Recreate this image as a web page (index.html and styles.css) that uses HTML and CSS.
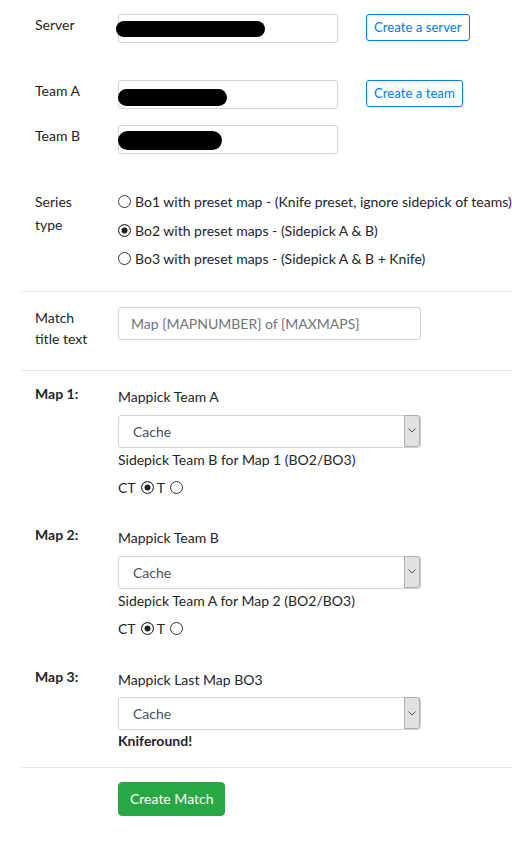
FILE: index.html
```html
<!DOCTYPE html>
<html lang="en">
<head>
<meta charset="utf-8">
<title>Create Match</title>
<link rel="stylesheet" href="styles.css">
</head>
<body>
<form class="page">
  <div class="row row-server">
    <label class="lbl">Server</label>
    <div class="field">
      <div class="input-wrap">
        <input class="input input-short" type="text">
        <span class="redact redact-server"></span>
      </div>
      <button type="button" class="btn-outline">Create a server</button>
    </div>
  </div>

  <div class="row row-team-a">
    <label class="lbl">Team A</label>
    <div class="field">
      <div class="input-wrap">
        <input class="input input-short" type="text">
        <span class="redact redact-a"></span>
      </div>
      <button type="button" class="btn-outline">Create a team</button>
    </div>
  </div>

  <div class="row row-team-b">
    <label class="lbl">Team B</label>
    <div class="field">
      <div class="input-wrap">
        <input class="input input-short" type="text">
        <span class="redact redact-b"></span>
      </div>
    </div>
  </div>

  <div class="row row-series">
    <label class="lbl lbl-series">Series<br>type</label>
    <div class="radios">
      <label class="opt"><input type="radio" name="series" class="radio">Bo1 with preset map - (Knife preset, ignore sidepick of teams)</label>
      <label class="opt"><input type="radio" name="series" class="radio" checked>Bo2 with preset maps - (Sidepick A &amp; B)</label>
      <label class="opt"><input type="radio" name="series" class="radio">Bo3 with preset maps - (Sidepick A &amp; B + Knife)</label>
    </div>
  </div>

  <hr class="sep sep-1">

  <div class="row row-title">
    <label class="lbl">Match<br>title text</label>
    <div class="field">
      <input class="input input-long" type="text" placeholder="Map {MAPNUMBER} of {MAXMAPS}">
    </div>
  </div>

  <hr class="sep sep-2">

  <div class="row row-map row-map1">
    <label class="lbl lbl-bold">Map 1:</label>
    <div class="map-body">
      <div class="sub">Mappick Team A</div>
      <div class="select-wrap">
        <select class="select"><option>Cache</option></select>
        <span class="select-arrow"><svg width="8" height="5" viewBox="0 0 8 5"><polyline points="0.5,0.5 4,4 7.5,0.5" fill="none" stroke="#555" stroke-width="1"/></svg></span>
      </div>
      <div class="sub sub-side">Sidepick Team B for Map 1 (BO2/BO3)</div>
      <div class="sides">CT<input type="radio" name="side1" class="radio" checked>T<input type="radio" name="side1" class="radio"></div>
    </div>
  </div>

  <div class="row row-map row-map2">
    <label class="lbl lbl-bold">Map 2:</label>
    <div class="map-body">
      <div class="sub">Mappick Team B</div>
      <div class="select-wrap">
        <select class="select"><option>Cache</option></select>
        <span class="select-arrow"><svg width="8" height="5" viewBox="0 0 8 5"><polyline points="0.5,0.5 4,4 7.5,0.5" fill="none" stroke="#555" stroke-width="1"/></svg></span>
      </div>
      <div class="sub sub-side">Sidepick Team A for Map 2 (BO2/BO3)</div>
      <div class="sides">CT<input type="radio" name="side2" class="radio" checked>T<input type="radio" name="side2" class="radio"></div>
    </div>
  </div>

  <div class="row row-map row-map3">
    <label class="lbl lbl-bold">Map 3:</label>
    <div class="map-body">
      <div class="sub">Mappick Last Map BO3</div>
      <div class="select-wrap">
        <select class="select"><option>Cache</option></select>
        <span class="select-arrow"><svg width="8" height="5" viewBox="0 0 8 5"><polyline points="0.5,0.5 4,4 7.5,0.5" fill="none" stroke="#555" stroke-width="1"/></svg></span>
      </div>
      <div class="sub knife">Kniferound!</div>
    </div>
  </div>

  <hr class="sep sep-3">

  <div class="row row-submit">
    <span></span>
    <div><button type="button" class="btn-success">Create Match</button></div>
  </div>
</form>
</body>
</html>
```

FILE: styles.css
```css
html, body {
  margin: 0;
  padding: 0;
  background: #fff;
}
body {
  font-family: Lato, "Open Sans", sans-serif;
  font-size: 14px;
  line-height: 21px;
  color: #212529;
  overflow: hidden;
}
.page {
  margin: 0;
  padding: 0 0 40px 0;
}
.row {
  display: grid;
  grid-template-columns: 83px auto;
  padding-left: 35px;
  align-items: start;
}
.lbl {
  line-height: 21px;
  white-space: nowrap;
}
.lbl-bold {
  font-weight: 700;
}
.field {
  display: flex;
  align-items: flex-start;
  gap: 28px;
}
.input-wrap {
  position: relative;
}
.input {
  box-sizing: border-box;
  display: block;
  font-family: inherit;
  font-size: 14px;
  color: #495057;
  background: #fff;
  border: 1px solid #ced4da;
  border-radius: 3px;
  padding: 0 12px;
  margin: 0;
  outline: none;
}
.input-short {
  width: 220px;
  height: 29px;
}
.input-long {
  width: 303px;
  height: 33px;
}
.input::placeholder {
  color: #6c757d;
  opacity: 1;
}
.redact {
  position: absolute;
  background: #000;
  border-radius: 9px;
}
.redact-server {
  left: -2px;
  top: 7px;
  width: 149px;
  height: 16px;
}
.redact-a {
  left: 0;
  top: 9px;
  width: 109px;
  height: 17px;
}
.redact-b {
  left: 0;
  top: 6px;
  width: 104px;
  height: 19px;
  border-radius: 10px;
}
.btn-outline {
  box-sizing: border-box;
  height: 27px;
  padding: 0 7px;
  font-family: inherit;
  font-size: 13.2px;
  line-height: 25px;
  color: #007bff;
  background: #fff;
  border: 1px solid #007bff;
  border-radius: 3px;
  cursor: pointer;
}
.row-server { padding-top: 14px; }
.row-team-a { margin-top: 37px; }
.row-team-b { margin-top: 16px; }
.row-series { margin-top: 36px; }
.lbl-series { line-height: 23px; }
.radios {
  display: flex;
  flex-direction: column;
  gap: 5.5px;
}
.opt {
  display: flex;
  align-items: center;
  line-height: 23px;
  white-space: nowrap;
}
.radio {
  -webkit-appearance: none;
  appearance: none;
  box-sizing: border-box;
  width: 13px;
  height: 13px;
  margin: 0 4px 0 0;
  border: 1px solid #333;
  border-radius: 50%;
  background: #fff;
  flex: none;
}
.radio:checked {
  background: #222;
  box-shadow: inset 0 0 0 2.5px #fff;
}
.sep {
  border: 0;
  border-top: 1px solid #e5e5e5;
  height: 0;
  margin: 0 0 0 21px;
}
.sep-1 { margin-top: 20.5px; }
.row-title { margin-top: 15.5px; }
.sep-2 { margin-top: 21px; }
.row-map1 { margin-top: 12px; }
.row-map2 { margin-top: 26px; }
.row-map3 { margin-top: 26.5px; }
.map-body {
  display: flex;
  flex-direction: column;
  padding-top: 3px;
}
.sub {
  line-height: 21px;
  white-space: nowrap;
}
.select-wrap {
  position: relative;
  width: 303px;
  height: 33px;
  margin-top: 7.5px;
}
.select {
  -webkit-appearance: none;
  appearance: none;
  box-sizing: border-box;
  width: 303px;
  height: 33px;
  margin: 0;
  padding: 0 0 0 14px;
  font-family: inherit;
  font-size: 14px;
  color: #495057;
  background: #fff;
  border: 1px solid #ced4da;
  border-radius: 3px;
  outline: none;
}
.select-arrow {
  position: absolute;
  right: 1px;
  top: 0;
  width: 16px;
  height: 32px;
  box-sizing: border-box;
  background: #e1e1e1;
  border: 1px solid #adadad;
  border-radius: 0 3px 3px 0;
  display: flex;
  align-items: center;
  justify-content: center;
}
.sub-side { margin-top: 1.5px; }
.sides {
  display: flex;
  align-items: center;
  line-height: 21px;
  margin-top: 7px;
}
.sides .radio {
  margin: 0 3px 0 5px;
}
.knife {
  font-weight: 700;
  margin-top: 0;
}
.sep-3 { margin-top: 16px; }
.row-submit { margin-top: 14px; }
.btn-success {
  box-sizing: border-box;
  height: 34px;
  padding: 0 11px;
  font-family: inherit;
  font-size: 14px;
  line-height: 32px;
  color: #fff;
  background: #28a745;
  border: 1px solid #28a745;
  border-radius: 4px;
  cursor: pointer;
}
```
